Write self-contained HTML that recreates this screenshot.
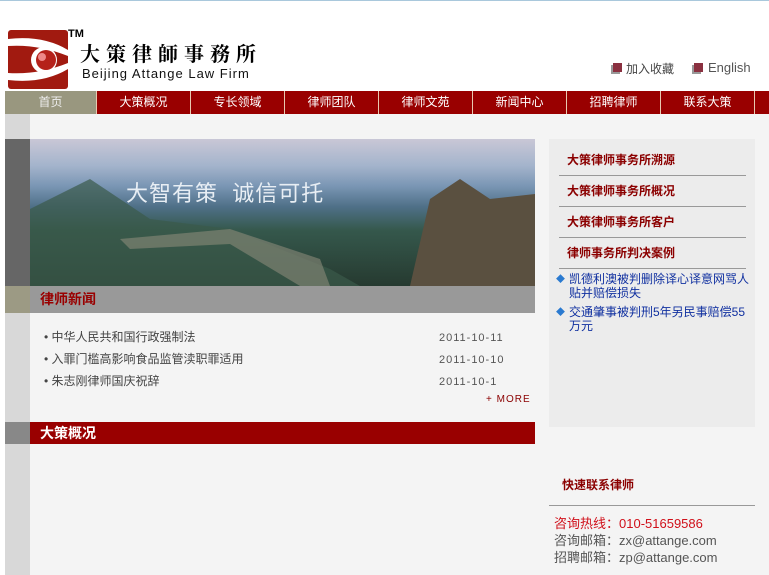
<!DOCTYPE html>
<html><head><meta charset="utf-8"><style>
*{margin:0;padding:0;box-sizing:border-box}
body{width:769px;height:575px;overflow:hidden;background:#fff;font-family:"Liberation Sans","Noto Sans CJK SC",sans-serif;position:relative}
.a{position:absolute}
.nav{top:91px;left:5px;width:764px;height:23px;background:#990000;display:flex}
.nav div{width:94px;border-right:1px solid #e8c8b0;color:#fff;font-size:12px;text-align:center;line-height:23px}
.nav div:first-child{width:92px;background:#99977f;color:#eee}
.rl{left:559px;width:187px;color:#8b0000;font-weight:bold;font-size:12px;border-bottom:1px solid #999;height:31px;line-height:31px;padding-left:8px}
</style></head><body>
<div class="a" style="top:0;left:0;width:769px;height:1px;background:#a9c8dc"></div>
<svg class="a" style="left:8px;top:30px" width="60" height="59" viewBox="0 0 60 59">
<rect width="60" height="59" rx="3" fill="#a11a10"/>
<path d="M0 9 Q35 5 60 20 L60 26 Q30 14 0 16Z" fill="#fff"/>
<path d="M0 50 Q35 54 60 39 L60 33 Q30 45 0 43Z" fill="#fff"/>
<circle cx="36" cy="30" r="13" fill="#fff"/>
<circle cx="38" cy="30" r="10" fill="#b5211a"/>
<circle cx="34" cy="27" r="4" fill="#e88"/>
</svg>
<div class="a" style="left:68px;top:28px;font-size:11px;font-weight:bold">TM</div>
<div class="a" style="left:80px;top:38px;font-family:'Noto Serif CJK SC',serif;font-size:20px;letter-spacing:6px;font-weight:bold">大策律師事務所</div>
<div class="a" style="left:82px;top:66px;font-size:13px;letter-spacing:1px;color:#111">Beijing Attange Law Firm</div>
<div class="a" style="left:613px;top:63px;width:9px;height:9px;background:#8a3040;box-shadow:-2px 2px 0 #999"></div>
<div class="a" style="left:626px;top:60px;font-size:12px;color:#444">加入收藏</div>
<div class="a" style="left:694px;top:63px;width:9px;height:9px;background:#8a3040;box-shadow:-2px 2px 0 #999"></div>
<div class="a" style="left:708px;top:60px;font-size:13px;color:#555">English</div>
<div class="a nav"><div>首页</div><div>大策概况</div><div>专长领域</div><div>律师团队</div><div>律师文苑</div><div>新闻中心</div><div>招聘律师</div><div>联系大策</div></div>
<div class="a" style="top:114px;left:5px;width:764px;height:461px;background:#f4f4f4"></div>
<div class="a" style="top:114px;left:5px;width:25px;height:461px;background:#d8d8d8"></div>
<div class="a" style="top:139px;left:5px;width:25px;height:147px;background:#666"></div>
<div class="a" style="top:286px;left:5px;width:25px;height:27px;background:#9c9a84"></div>
<div class="a" style="top:422px;left:5px;width:25px;height:22px;background:#888"></div>
<div class="a" style="top:139px;left:30px;width:505px;height:147px;background:linear-gradient(180deg,#c9c7d6 0%,#a4b4cc 18%,#7a96b4 32%,#4f7088 46%,#35584c 62%,#263a30 100%)"></div>
<svg class="a" style="top:139px;left:30px" width="505" height="147"><path d="M380 147 L400 60 L430 40 L460 60 L505 55 L505 147Z" fill="#5a5040"/><path d="M0 147 L0 70 L60 40 L120 80 L200 90 L300 130 L330 147Z" fill="#3b5a4a" opacity=".7"/><path d="M90 100 L200 90 L290 120 L300 147 L270 147 L200 105 L100 110Z" fill="#8a8a7a" opacity=".6"/></svg>
<div class="a" style="top:176px;left:126px;font-size:22px;color:#e8eef4;letter-spacing:1px">大智有策&nbsp;&nbsp;诚信可托</div>
<div class="a" style="top:286px;left:30px;width:505px;height:27px;background:#999;color:#990000;font-weight:bold;font-size:14px;line-height:27px;padding-left:10px">律师新闻</div>
<div class="a" style="top:326px;left:44px;font-size:12px;color:#444;line-height:22px">• 中华人民共和国行政强制法<br>• 入罪门槛高影响食品监管渎职罪适用<br>• 朱志刚律师国庆祝辞</div>
<div class="a" style="top:327px;left:439px;font-size:11px;color:#555;line-height:22px;letter-spacing:1px">2011-10-11<br>2011-10-10<br>2011-10-1</div>
<div class="a" style="top:394px;left:486px;font-size:10px;color:#8b0000;letter-spacing:1px">+ MORE</div>
<div class="a" style="top:422px;left:30px;width:505px;height:22px;background:#990000;color:#fff;font-weight:bold;font-size:14px;line-height:22px;padding-left:10px">大策概况</div>
<div class="a" style="top:139px;left:549px;width:206px;height:288px;background:#ececec"></div>
<div class="a rl" style="top:145px">大策律师事务所溯源</div>
<div class="a rl" style="top:176px">大策律师事务所概况</div>
<div class="a rl" style="top:207px">大策律师事务所客户</div>
<div class="a rl" style="top:238px">律师事务所判决案例</div>
<div class="a" style="top:272px;left:556px;width:196px;font-size:12px;color:#1030a0;line-height:14px">
<div style="padding-left:13px;position:relative"><span style="position:absolute;left:0;color:#2a7ad0;font-size:9px">◆</span>凯德利澳被判删除译心译意网骂人贴并赔偿损失</div>
<div style="padding-left:13px;position:relative;margin-top:5px"><span style="position:absolute;left:0;color:#2a7ad0;font-size:9px">◆</span>交通肇事被判刑5年另民事赔偿55万元</div></div>
<div class="a" style="top:476px;left:562px;font-size:12px;font-weight:bold;color:#8b0000">快速联系律师</div>
<div class="a" style="top:505px;left:549px;width:206px;height:1px;background:#999"></div>
<div class="a" style="top:515px;left:554px;font-size:13px;line-height:17px;color:#555"><span style="color:#d0101a">咨询热线：010-51659586</span><br>咨询邮箱：zx@attange.com<br>招聘邮箱：zp@attange.com</div>
</body></html>
